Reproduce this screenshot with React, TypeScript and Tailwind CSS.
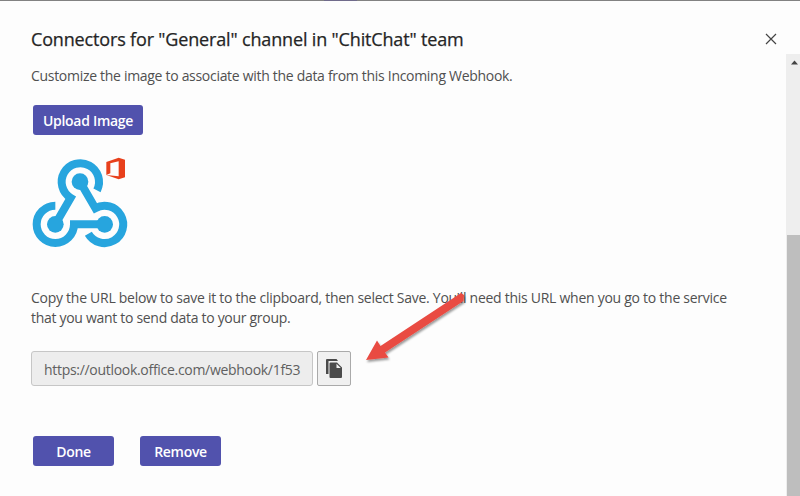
import React from "react";

function WebhookLogo() {
  return (
    <svg className="block h-[110px] w-[120px]" viewBox="0 0 360 330" fill="none">
      <g stroke="#27a5de" strokeWidth="24" strokeLinejoin="miter">
        <path d="M231 136 A56 56 0 1 0 152 158.5 L106 238" />
        <path d="M180 110 L226 189.500 A56 56 0 1 1 205 266" />
        <path d="M106 182 A56 56 0 1 0 162 238 L254 238" />
      </g>
      <g fill="#27a5de">
        <circle cx="180" cy="110" r="25" />
        <circle cx="106" cy="238" r="25" />
        <circle cx="254" cy="238" r="25" />
      </g>
      <path
        fill="#e8401c"
        fillRule="evenodd"
        d="M259 51 L296 38 L315 44 V97 L296 103 L259 90 L296 94 V49 L271 55 V85 L259 90 Z"
      />
    </svg>
  );
}

function CopyIcon() {
  return (
    <svg className="block h-5 w-4" viewBox="0 0 16 20">
      <path fill="#4a4a4a" d="M1 0 H10.500 L12 2 H2.500 V15 H0 V1 Q0 0 1 0 Z" />
      <path
        fill="#4a4a4a"
        fillRule="evenodd"
        d="M4.500 3.500 H11 L16 8.500 V18 Q16 19 15 19 H4.500 Q3.500 19 3.500 18 V4.500 Q3.500 3.500 4.500 3.500 Z M10.500 4.800 V9 H14.800 Z"
      />
    </svg>
  );
}

function Arrow() {
  return (
    <svg className="absolute left-[360px] top-[285px] h-20 w-28 overflow-visible" viewBox="0 0 112 80">
      <defs>
        <filter id="shadow" x="-20%" y="-20%" width="140%" height="150%">
          <feDropShadow dx="1" dy="2" stdDeviation="1.300" floodColor="#000" floodOpacity="0.4" />
        </filter>
      </defs>
      <path
        filter="url(#shadow)"
        fill="#e94b43"
        d="M6 75 L17 55.500 L20.500 61 L101 8 L104 10 L103.500 16 L25 67.500 L28.500 72.500 Z"
      />
    </svg>
  );
}

function Button({ children, className }: { children: string; className: string }) {
  return (
    <button
      className={`flex h-[30px] items-center justify-center whitespace-nowrap rounded-[3px] bg-[#5152ad] pt-[2px] text-[14px] font-semibold leading-5 tracking-[-0.3px] text-white ${className}`}
    >
      {children}
    </button>
  );
}

export default function App() {
  return (
    <div className="relative flex h-[496px] w-[800px] flex-col overflow-hidden bg-[#fdfdfd] font-['Open_Sans','Noto_Sans',sans-serif] text-[#505050]">
      <div className="flex h-px shrink-0 bg-[#828282]">
        <div className="ml-[324px] w-[33px] bg-[#706b8b]" />
      </div>
      <header className="flex h-[53px] shrink-0 items-start justify-between pl-[31px] pr-[23px]">
        <h1 className="mt-[26px] whitespace-nowrap text-[18px] font-medium leading-6 tracking-[-0.16px] text-[#252525] [-webkit-text-stroke:0.25px_#252525]">
          Connectors for "General" channel in "ChitChat" team
        </h1>
        <svg className="mt-8 h-3 w-3" viewBox="0 0 12 12" stroke="#444" strokeWidth="1.200">
          <path d="M1 1 L11 11 M11 1 L1 11" />
        </svg>
      </header>
      <div className="flex min-h-0 flex-1">
        <main className="flex w-[786px] shrink-0 flex-col items-start pl-[31px]">
          <p className="mt-3 whitespace-nowrap text-[14px] leading-5 tracking-[-0.3px]">
            Customize the image to associate with the data from this Incoming Webhook.
          </p>
          <Button className="ml-[2px] mt-[19px] w-[110px]">Upload Image</Button>
          <div className="-ml-[11px] mt-[10px]">
            <WebhookLogo />
          </div>
          <div className="mt-[33px] whitespace-nowrap text-[14px] leading-5 tracking-[-0.27px]">
            <p>Copy the URL below to save it to the clipboard, then select Save. You'll need this URL when you go to the service</p>
            <p className="tracking-[-0.3px]">that you want to send data to your group.</p>
          </div>
          <div className="mt-[23px] flex gap-1">
            <div className="flex h-[35px] w-[282px] items-center overflow-hidden whitespace-nowrap rounded-[3px] border border-[#c6c6c6] bg-[#ededed] pl-3 pt-[2px] text-[14px] leading-5 tracking-[-0.3px] text-[#606060]">
              <span>https://outlook.office.com/webhook/1f53</span>
            </div>
            <button className="flex h-[35px] w-[34px] items-center justify-center rounded-[2px] border border-[#aaa] bg-[#f0f0f0]">
              <CopyIcon />
            </button>
          </div>
          <div className="ml-[2px] mt-[50px] flex gap-[26px]">
            <Button className="w-[81px]">Done</Button>
            <Button className="w-[81px]">Remove</Button>
          </div>
        </main>
        <aside className="flex w-[14px] shrink-0 flex-col bg-[#eeeeee]">
          <svg className="ml-[5px] mt-[6px] h-[5px] w-[7px]" viewBox="0 0 7 5">
            <path d="M0 4.500 L3.500 0.500 L7 4.500 Z" fill="#444" />
          </svg>
          <div className="ml-[1px] mt-[170px] flex-1 bg-[#bebebe]" />
        </aside>
      </div>
      <Arrow />
    </div>
  );
}
